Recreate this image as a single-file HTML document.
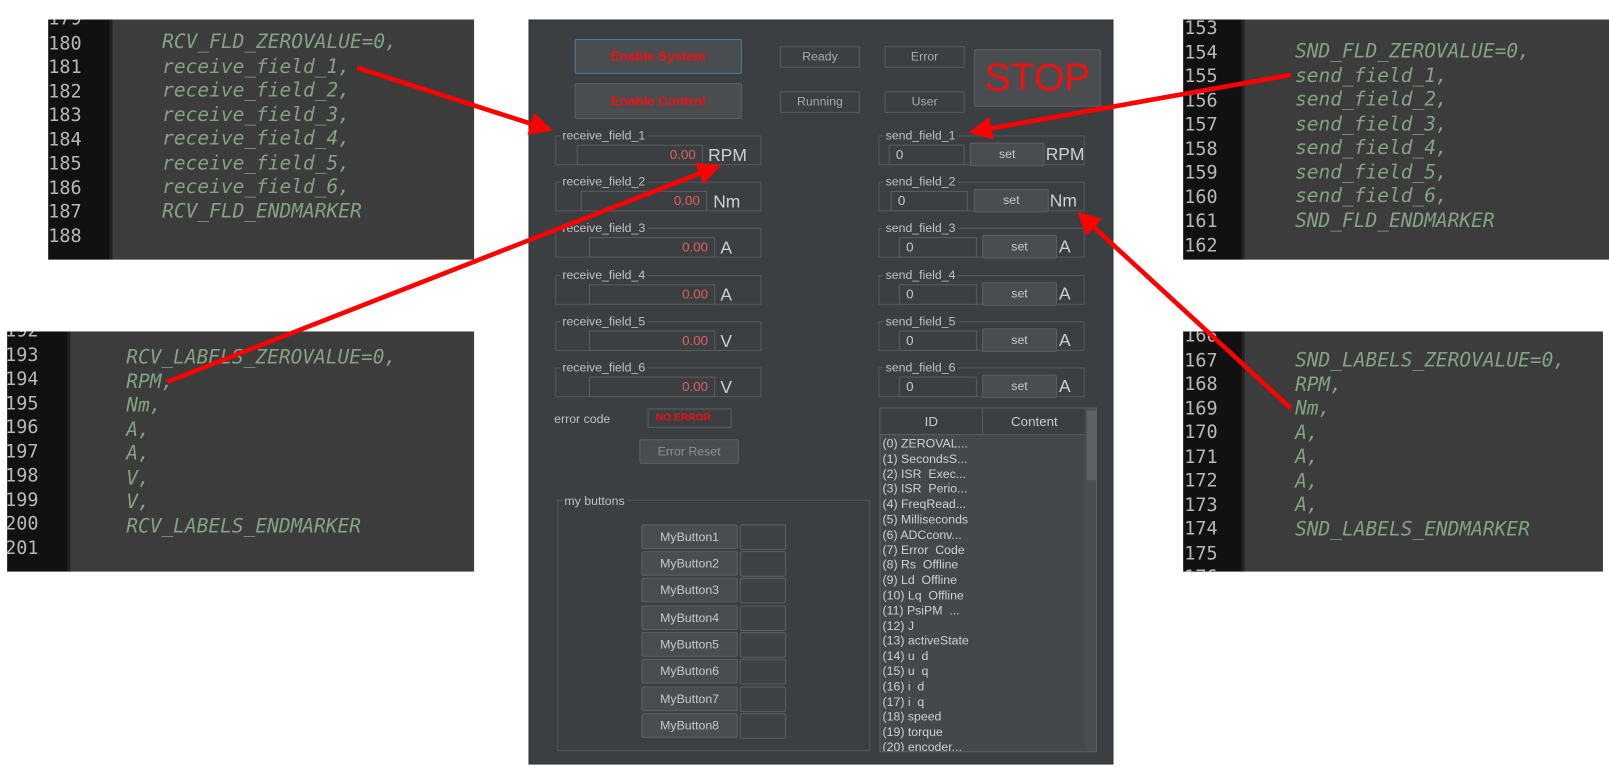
<!DOCTYPE html>
<html><head><meta charset="utf-8"><style>
*{margin:0;padding:0;box-sizing:border-box}
body{width:1609px;height:777px;background:#fff;position:relative;overflow:hidden;font-family:"Liberation Sans",sans-serif}
#w{position:absolute;left:0;top:0;width:1568px;height:758px;transform:scale(1.0262);transform-origin:0 0}
.a{position:absolute}
.code{position:absolute;background:#3c3c3c;overflow:hidden}
.gut{position:absolute;top:0;bottom:0;left:0;background:#111}
.sep{position:absolute;top:0;bottom:0;width:3px;border-left:1px solid #2a2a2a;border-right:1px solid #333;background:#1a1a1a}
.ln{position:absolute;font-family:"DejaVu Sans Mono","Liberation Mono",monospace;font-size:18px;color:#b8b8b8;line-height:23.5px}
.ct{position:absolute;font-family:"DejaVu Sans Mono","Liberation Mono",monospace;font-style:italic;font-size:19px;color:#84a284;line-height:23.5px;white-space:pre}
.app{position:absolute;left:515px;top:19px;width:570px;height:726px;background:#3c3f41;border:1px solid #2e3032}
.btn{position:absolute;background:#4a4d50;border:1px solid #5c5f62;border-radius:2px;color:#c8c8c8;font-size:12px;text-align:center}
.lab{position:absolute;border:1px solid #595c5f;color:#a8a8a8;font-size:12px;text-align:center;line-height:19px}
.grp{position:absolute;border:1px solid #55585b}
.gl{position:absolute;background:#3c3f41;color:#c0c0c0;font-size:12px;padding:0 2px;line-height:12px}
.in{position:absolute;border:1px solid #5a5d60;background:#3c3f41;font-size:13px;line-height:18px}
.u{position:absolute;color:#d0d0d0;font-size:17px;line-height:20px}
</style></head><body><div id="w">

<div class="code" style="left:47px;top:19px;width:415px;height:234px">
<div class="gut" style="width:60px"></div><div class="sep" style="left:60px"></div>
<div class="ln" style="left:0;top:-12px">179<br>180<br>181<br>182<br>183<br>184<br>185<br>186<br>187<br>188</div>
<div class="ct" style="left:111px;top:11px">RCV_FLD_ZEROVALUE=0,
receive_field_1,
receive_field_2,
receive_field_3,
receive_field_4,
receive_field_5,
receive_field_6,
RCV_FLD_ENDMARKER</div>
</div>
<div class="code" style="left:7px;top:323px;width:455px;height:234px">
<div class="gut" style="width:59px"></div><div class="sep" style="left:59px"></div>
<div class="ln" style="left:-2px;top:-12px">192<br>193<br>194<br>195<br>196<br>197<br>198<br>199<br>200<br>201</div>
<div class="ct" style="left:116px;top:14px">RCV_LABELS_ZEROVALUE=0,
RPM,
Nm,
A,
A,
V,
V,
RCV_LABELS_ENDMARKER</div>
</div>
<div class="code" style="left:1153px;top:19px;width:415px;height:234px">
<div class="gut" style="width:57px"></div><div class="sep" style="left:57px"></div>
<div class="ln" style="left:1px;top:-3px">153<br>154<br>155<br>156<br>157<br>158<br>159<br>160<br>161<br>162<br>163</div>
<div class="ct" style="left:109px;top:20px">SND_FLD_ZEROVALUE=0,
send_field_1,
send_field_2,
send_field_3,
send_field_4,
send_field_5,
send_field_6,
SND_FLD_ENDMARKER</div>
</div>
<div class="code" style="left:1153px;top:323px;width:409px;height:234px">
<div class="gut" style="width:57px"></div><div class="sep" style="left:57px"></div>
<div class="ln" style="left:1px;top:-7px">166<br>167<br>168<br>169<br>170<br>171<br>172<br>173<br>174<br>175<br>176</div>
<div class="ct" style="left:109px;top:17px">SND_LABELS_ZEROVALUE=0,
RPM,
Nm,
A,
A,
A,
A,
SND_LABELS_ENDMARKER</div>
</div>

<div class="app"></div>
<div class="btn" style="left:560px;top:38px;width:163px;height:34px;border-color:#4b77a8;color:#f01010;font-weight:bold;font-size:13px;line-height:32px">Enable System</div>
<div class="btn" style="left:560px;top:81px;width:163px;height:35px;color:#f01010;font-weight:bold;font-size:13px;line-height:33px">Enable Control</div>
<div class="lab" style="left:760px;top:45px;width:78px;height:21px">Ready</div>
<div class="lab" style="left:862px;top:45px;width:78px;height:21px">Error</div>
<div class="lab" style="left:760px;top:89px;width:78px;height:21px">Running</div>
<div class="lab" style="left:862px;top:89px;width:78px;height:21px">User</div>
<div class="btn" style="left:949px;top:48px;width:124px;height:56px;color:#f01010;font-size:38px;line-height:54px">STOP</div>

<div class="grp" style="left:541px;top:132px;width:201px;height:29px"></div><div class="gl" style="left:546px;top:126px">receive_field_1</div>
<div class="in" style="left:562px;top:141px;width:123px;height:20px;color:#e06060;text-align:right;padding-right:6px">0.00</div><div class="u" style="left:690px;top:142px">RPM</div>
<div class="grp" style="left:541px;top:177px;width:201px;height:29px"></div><div class="gl" style="left:546px;top:171px">receive_field_2</div>
<div class="in" style="left:566px;top:186px;width:123px;height:20px;color:#e06060;text-align:right;padding-right:6px">0.00</div><div class="u" style="left:695px;top:187px">Nm</div>
<div class="grp" style="left:541px;top:222px;width:201px;height:29px"></div><div class="gl" style="left:546px;top:216px">receive_field_3</div>
<div class="in" style="left:574px;top:231px;width:123px;height:20px;color:#e06060;text-align:right;padding-right:6px">0.00</div><div class="u" style="left:702px;top:232px">A</div>
<div class="grp" style="left:541px;top:268px;width:201px;height:29px"></div><div class="gl" style="left:546px;top:262px">receive_field_4</div>
<div class="in" style="left:574px;top:277px;width:123px;height:20px;color:#e06060;text-align:right;padding-right:6px">0.00</div><div class="u" style="left:702px;top:278px">A</div>
<div class="grp" style="left:541px;top:313px;width:201px;height:29px"></div><div class="gl" style="left:546px;top:307px">receive_field_5</div>
<div class="in" style="left:574px;top:322px;width:123px;height:20px;color:#e06060;text-align:right;padding-right:6px">0.00</div><div class="u" style="left:702px;top:323px">V</div>
<div class="grp" style="left:541px;top:358px;width:201px;height:29px"></div><div class="gl" style="left:546px;top:352px">receive_field_6</div>
<div class="in" style="left:574px;top:367px;width:123px;height:20px;color:#e06060;text-align:right;padding-right:6px">0.00</div><div class="u" style="left:702px;top:368px">V</div>

<div class="grp" style="left:856px;top:132px;width:201px;height:29px"></div><div class="gl" style="left:861px;top:126px">send_field_1</div>
<div class="in" style="left:866px;top:141px;width:74px;height:20px;color:#c8c8c8;padding-left:6px">0</div><div class="btn" style="left:945px;top:139px;width:73px;height:23px;line-height:21px">set</div><div class="u" style="left:1019px;top:141px">RPM</div>
<div class="grp" style="left:856px;top:177px;width:201px;height:29px"></div><div class="gl" style="left:861px;top:171px">send_field_2</div>
<div class="in" style="left:868px;top:186px;width:75px;height:20px;color:#c8c8c8;padding-left:6px">0</div><div class="btn" style="left:949px;top:184px;width:73px;height:23px;line-height:21px">set</div><div class="u" style="left:1023px;top:186px">Nm</div>
<div class="grp" style="left:856px;top:222px;width:201px;height:29px"></div><div class="gl" style="left:861px;top:216px">send_field_3</div>
<div class="in" style="left:876px;top:231px;width:76px;height:20px;color:#c8c8c8;padding-left:6px">0</div><div class="btn" style="left:957px;top:229px;width:73px;height:23px;line-height:21px">set</div><div class="u" style="left:1032px;top:231px">A</div>
<div class="grp" style="left:856px;top:268px;width:201px;height:29px"></div><div class="gl" style="left:861px;top:262px">send_field_4</div>
<div class="in" style="left:876px;top:277px;width:76px;height:20px;color:#c8c8c8;padding-left:6px">0</div><div class="btn" style="left:957px;top:275px;width:73px;height:23px;line-height:21px">set</div><div class="u" style="left:1032px;top:277px">A</div>
<div class="grp" style="left:856px;top:313px;width:201px;height:29px"></div><div class="gl" style="left:861px;top:307px">send_field_5</div>
<div class="in" style="left:876px;top:322px;width:76px;height:20px;color:#c8c8c8;padding-left:6px">0</div><div class="btn" style="left:957px;top:320px;width:73px;height:23px;line-height:21px">set</div><div class="u" style="left:1032px;top:322px">A</div>
<div class="grp" style="left:856px;top:358px;width:201px;height:29px"></div><div class="gl" style="left:861px;top:352px">send_field_6</div>
<div class="in" style="left:876px;top:367px;width:76px;height:20px;color:#c8c8c8;padding-left:6px">0</div><div class="btn" style="left:957px;top:365px;width:73px;height:23px;line-height:21px">set</div><div class="u" style="left:1032px;top:367px">A</div>

<div class="a" style="left:540px;top:401px;color:#c0c0c0;font-size:12px">error code</div>
<div class="a" style="left:631px;top:398px;width:82px;height:19px;border:1px solid #5c5f62;color:#f01010;font-weight:bold;font-size:10px;line-height:17px;padding-left:7px">NO ERROR</div>
<div class="btn" style="left:623px;top:428px;width:97px;height:24px;line-height:22px;color:#909090">Error Reset</div>

<div class="grp" style="left:543px;top:487px;width:305px;height:245px"></div><div class="gl" style="left:548px;top:482px">my buttons</div>
<div class="a" style="left:625px;top:511px">
<div class="btn" style="left:0;top:0;width:94px;height:24px;line-height:22px">MyButton1</div><div class="btn" style="left:96px;top:0;width:45px;height:25px;background:#3f4245"></div>
<div class="btn" style="left:0;top:26px;width:94px;height:24px;line-height:22px">MyButton2</div><div class="btn" style="left:96px;top:26px;width:45px;height:25px;background:#3f4245"></div>
<div class="btn" style="left:0;top:52px;width:94px;height:24px;line-height:22px">MyButton3</div><div class="btn" style="left:96px;top:52px;width:45px;height:25px;background:#3f4245"></div>
<div class="btn" style="left:0;top:79px;width:94px;height:24px;line-height:22px">MyButton4</div><div class="btn" style="left:96px;top:79px;width:45px;height:25px;background:#3f4245"></div>
<div class="btn" style="left:0;top:105px;width:94px;height:24px;line-height:22px">MyButton5</div><div class="btn" style="left:96px;top:105px;width:45px;height:25px;background:#3f4245"></div>
<div class="btn" style="left:0;top:131px;width:94px;height:24px;line-height:22px">MyButton6</div><div class="btn" style="left:96px;top:131px;width:45px;height:25px;background:#3f4245"></div>
<div class="btn" style="left:0;top:158px;width:94px;height:24px;line-height:22px">MyButton7</div><div class="btn" style="left:96px;top:158px;width:45px;height:25px;background:#3f4245"></div>
<div class="btn" style="left:0;top:184px;width:94px;height:24px;line-height:22px">MyButton8</div><div class="btn" style="left:96px;top:184px;width:45px;height:25px;background:#3f4245"></div>
</div>

<div class="a" style="left:857px;top:397px;width:212px;height:336px;border:1px solid #5c5f62;background:#45484a;overflow:hidden">
<div class="a" style="left:0;top:0;width:100px;height:26px;border-right:1px solid #5c5f62;border-bottom:1px solid #5c5f62;background:#3c3f41;color:#c8c8c8;font-size:13px;text-align:center;line-height:26px">ID</div>
<div class="a" style="left:100px;top:0;width:100px;height:26px;border-bottom:1px solid #5c5f62;background:#3c3f41;color:#c8c8c8;font-size:13px;text-align:center;line-height:26px">Content</div>
<div class="a" style="left:199px;top:0;width:12px;height:336px;background:#4a4d50"></div>
<div class="a" style="left:201px;top:2px;width:9px;height:68px;background:#5e6164"></div>
<div class="a" style="left:2px;top:27px;color:#d0d0d0;font-size:12px;line-height:14.8px;white-space:pre">(0) ZEROVAL...
(1) SecondsS...
(2) ISR  Exec...
(3) ISR  Perio...
(4) FreqRead...
(5) Milliseconds
(6) ADCconv...
(7) Error  Code
(8) Rs  Offline
(9) Ld  Offline
(10) Lq  Offline
(11) PsiPM  ...
(12) J
(13) activeState
(14) u  d
(15) u  q
(16) i  d
(17) i  q
(18) speed
(19) torque
(20) encoder...
(21) analogf...</div>
</div>

<svg class="a" style="left:0;top:0" width="1568" height="758">
<defs><marker id="h" markerWidth="5" markerHeight="5" refX="2.5" refY="2.5" orient="auto"><path d="M0,0 L5,2.5 L0,5 z" fill="#ff0000"/></marker></defs>
<g stroke="#ff0000" stroke-width="4.5" marker-end="url(#h)">
<line x1="348" y1="66" x2="528" y2="124"/>
<line x1="163" y1="372" x2="692" y2="165"/>
<line x1="1258" y1="73" x2="955" y2="127"/>
<line x1="1258" y1="398" x2="1058" y2="214"/>
</g>
</svg>
</div></body></html>
